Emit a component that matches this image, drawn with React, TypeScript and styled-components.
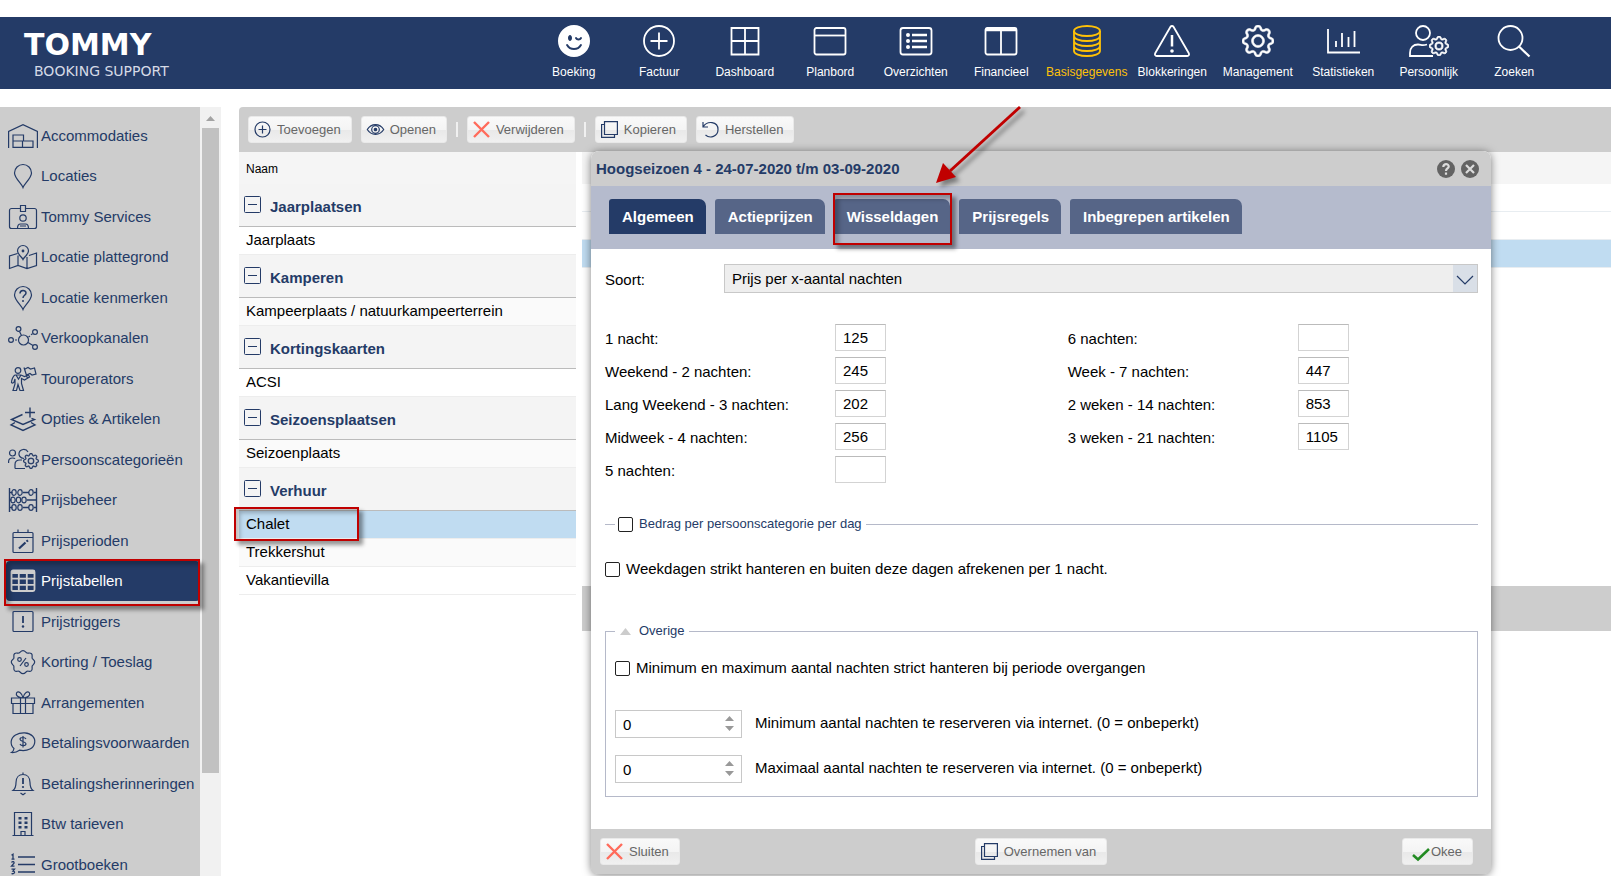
import React from 'react';
import styled, { createGlobalStyle, css } from 'styled-components';
import { BsEmojiWinkFill, BsGear } from 'react-icons/bs';

const navy = '#243b67';
const grey = '#cdcdcd';
const red = '#c00000';
const line = '#b5b9c9';

const GlobalStyle = createGlobalStyle`
  *, *::before, *::after { box-sizing: border-box; }
  body {
    margin: 0;
    background: #fff;
    color: #000;
    font-family: "Liberation Sans", Arial, Helvetica, sans-serif;
    font-size: 15px;
    line-height: 16px;
  }
  button, input, select { font: inherit; margin: 0; }
`;

const Page = styled.div`
  display: flex;
  flex-direction: column;
  gap: 18px;
  height: 100vh;
  padding-top: 17px;
  overflow: hidden;
`;

/* ---------- top bar ---------- */

const TopBar = styled.header`
  display: flex;
  flex: none;
  justify-content: space-between;
  height: 72px;
  padding: 0 54px 0 24px;
  background: ${navy};
`;

const Logo = styled.div`
  display: flex;
  flex-direction: column;
  padding-top: 10px;
  color: #fff;
  font-family: "DejaVu Sans", sans-serif;
`;

const LogoName = styled.span`
  font-size: 30px;
  font-weight: 700;
  line-height: 36px;
`;

const LogoTag = styled.span`
  padding-left: 10px;
  color: #d5dae6;
  font-size: 14px;
  line-height: 16px;
`;

const MainNav = styled.nav`
  display: grid;
  grid-template-columns: repeat(12, 1fr);
  width: 1026px;
`;

const MainLink = styled.a<{ $active?: boolean }>`
  display: flex;
  flex-direction: column;
  align-items: center;
  gap: 7px;
  padding-top: 8px;
  color: ${p => (p.$active ? '#ffc107' : '#fff')};
  font-size: 12px;
  text-decoration: none;
`;

const MainIcon = styled.svg.attrs({ viewBox: '0 0 40 32', 'aria-hidden': true })`
  width: 40px;
  height: 32px;
  overflow: visible;
  fill: none;
  stroke: currentColor;
  stroke-width: 1.8;
`;

const solid = { fill: 'currentColor', stroke: 'none' };
const gear = { fill: 'currentColor', stroke: 'currentColor', strokeWidth: 0.3 };

const mainItems: { label: string; active?: boolean; icon: React.ReactNode }[] = [
  { label: 'Boeking', icon: <BsEmojiWinkFill x={4} y={0} size={32} {...solid} /> },
  { label: 'Factuur', icon: <><circle cx="20" cy="16" r="15" /><path d="M11.5 16h17M20 7.5v17" /></> },
  { label: 'Dashboard', icon: <path d="M6.5 3h27v26.500h-27zM20 3v26.500M6.500 16h27" /> },
  { label: 'Planbord', icon: <><rect x="4.500" y="3" width="31" height="26.500" rx="2" /><path d="M4.500 10.500h31" /></> },
  {
    label: 'Overzichten',
    icon: (
      <>
        <rect x="4.500" y="3" width="31" height="26.500" rx="2.500" />
        <path d="M16 10h15M16 16h15M16 22h15" strokeWidth="2.400" />
        <g {...solid}><circle cx="12" cy="10" r="2" /><circle cx="12" cy="16" r="2" /><circle cx="12" cy="22" r="2" /></g>
      </>
    ),
  },
  { label: 'Financieel', icon: <><rect x="4.500" y="3" width="31" height="26.500" rx="2" /><path d="M20 5v24.500" /><path d="M4.500 4.500h31" strokeWidth="3.500" /></> },
  {
    label: 'Basisgegevens',
    active: true,
    icon: (
      <>
        <ellipse cx="20" cy="6" rx="13" ry="5" />
        <path d="M7 6v20c0 2.800 5.800 5 13 5s13-2.200 13-5V6M7 11c0 2.800 5.800 5 13 5s13-2.200 13-5M7 16c0 2.800 5.800 5 13 5s13-2.200 13-5M7 21c0 2.800 5.800 5 13 5s13-2.200 13-5" />
      </>
    ),
  },
  {
    label: 'Blokkeringen',
    icon: (
      <>
        <path d="M18.500 1.800a1.800 1.800 0 0 1 3 0l15.300 26.500c.700 1.300 0 2.700-1.500 2.700H4.700c-1.500 0-2.200-1.400-1.500-2.700z" />
        <path d="M20 10v11.500" strokeWidth="2.500" />
        <circle cx="20" cy="26" r="1.800" {...solid} />
      </>
    ),
  },
  { label: 'Management', icon: <BsGear x={4} y={0} size={32} {...gear} /> },
  { label: 'Statistieken', icon: <path d="M5 4v23.500h32M13 16v6M19 8v14M25.500 12v10M31.500 6v16" /> },
  {
    label: 'Persoonlijk',
    icon: (
      <>
        <circle cx="14" cy="8" r="7" />
        <path d="M24 31H1v-3c0-5.500 3.500-8.500 8-8.500 3.500 0 3.500 1.500 9 0" />
        <BsGear x={20} y={11} size={20} {...gear} strokeWidth={0.6} />
      </>
    ),
  },
  { label: 'Zoeken', icon: <><circle cx="16.500" cy="13" r="12" /><path d="M25 21.500l10.500 10" strokeWidth="2.200" /></> },
];

/* ---------- side bar ---------- */

const Content = styled.div`
  display: flex;
  flex: 1;
  min-height: 0;
`;

const SideNav = styled.nav`
  position: relative;
  z-index: 1;
  flex: none;
  width: 200px;
  padding-top: 8px;
  background: ${grey};
`;

const SideLink = styled.a<{ $active?: boolean }>`
  position: relative;
  display: flex;
  align-items: center;
  gap: 3px;
  height: 40px;
  padding-left: 8px;
  color: ${navy};
  text-decoration: none;
  &:nth-child(odd) { height: 41px; }
  ${p => p.$active && css`
    margin-left: 6px;
    padding-left: 2px;
    border-radius: 4px;
    background: ${navy};
    color: #fff;
    svg { color: ${grey}; }
  `}
`;

const SideIcon = styled.svg.attrs({ viewBox: '0 0 30 24', 'aria-hidden': true })`
  flex: none;
  width: 30px;
  height: 24px;
  overflow: visible;
  fill: none;
  stroke: currentColor;
  stroke-width: 1.200;
`;

const Highlight = styled.span<{ $inset: string }>`
  position: absolute;
  inset: ${p => p.$inset};
  border: 2px solid ${red};
  box-shadow: 4px 4px 4px rgba(0, 0, 0, 0.4), inset 4px 4px 4px rgba(0, 0, 0, 0.25);
  pointer-events: none;
`;

const Scrollbar = styled.div`
  display: flex;
  flex: none;
  flex-direction: column;
  align-items: center;
  width: 21px;
  background: #f1f1f1;
`;

const ScrollArrow = styled.svg.attrs({ viewBox: '0 0 21 21', 'aria-hidden': true })`
  flex: none;
  width: 21px;
  height: 21px;
  fill: #a3a3a3;
`;

const ScrollTrack = styled.div`
  flex: 1;
  width: 17px;
`;

const ScrollThumb = styled.div`
  height: calc(100% - 103px);
  background: #c1c1c1;
`;

const pin = 'M15 23.500C13.500 19.500 6.500 14 6.500 9a8.500 8.500 0 0 1 17 0c0 5-7 10.500-8.500 14.500z';

const sideItems: { label: string; active?: boolean; icon: React.ReactNode }[] = [
  { label: 'Accommodaties', icon: <path d="M.600 24V7.500L15 .700l14.400 6.800V24M5 23.400V11h10.500v6H5h20v6.400zM14.500 17v6.400" /> },
  { label: 'Locaties', icon: <path d={pin} /> },
  {
    label: 'Tommy Services',
    icon: <><path d="M12.500 3.500H3.500a2 2 0 0 0-2 2v16a2 2 0 0 0 2 2h23a2 2 0 0 0 2-2v-16a2 2 0 0 0-2-2h-9M12.500.500h5v6h-5zM9.500 23.500c0-3 1-4.500 3-4.500h5c2 0 3 1.500 3 4.500M12 21h6" /><circle cx="15" cy="13" r="3.200" /></>,
  },
  {
    label: 'Locatie plattegrond',
    icon: <><path d="M15 14.500c-1-2.500-5.500-5-5.500-8.500a5.500 5.500 0 0 1 11 0c0 3.500-4.500 6-5.500 8.500zM9.500 8.500L1.500 11v12.500l8.500-3 9 3 9.500-3V8l-7.500 2.500M10 10.500v10M19 12v11.500" /><circle cx="15" cy="6" r=".800" fill="currentColor" /></>,
  },
  { label: 'Locatie kenmerken', icon: <><path d={pin} /><path d="M12 7.500c0-4 6-4 6-.500 0 2.500-3 2-3 5" strokeWidth="1.500" /><circle cx="15" cy="15" r="1" {...solid} /></> },
  {
    label: 'Verkoopkanalen',
    icon: <><circle cx="15.500" cy="14" r="5" /><circle cx="3" cy="14" r="2.400" /><circle cx="10.500" cy="3" r="2.400" /><circle cx="27" cy="6" r="2.400" /><circle cx="27" cy="21" r="2.400" /><path d="M7 14h2M11.500 5.500l2 4M20.500 11l1.500-1M23 8.800l1.500-1M20 16.500l5 3" /></>,
  },
  {
    label: 'Touroperators',
    icon: <><circle cx="10" cy="3.500" r="2.800" /><path d="M7 8c-2 1-3.500 5-3.500 7.500 1 1 2 .500 2.500-.500l1-3v5l-2 6.500h3.500l1.500-6 2 6h3.500l-2-7v-5l3 1.500 5-3-1-2-4 1.500L13 8zM8 8l2.500 4L13 8M19.500 11.500L16 .500M17 2l3-1.500 2.500 1.500L26.500 1 28 7l-4 1-2-1.500-3.500 1.500" /></>,
  },
  { label: 'Opties & Artikelen', icon: <path d="M14.500 7.500L3.500 12.500l11.500 5 11.500-5-3-1.200M7 15.500l-4 2.500 12 5.500L27 18l-4-2.500M22 .500v10M17 5.500h10" strokeWidth="1.400" /> },
  {
    label: 'Persoonscategorieën',
    icon: <><circle cx="4.500" cy="5" r="3" /><path d="M.600 15v-1.500c0-2.500 1.500-3.500 4-3.500 1.200 0 2 .200 2.500.600M16 10.500c-4-.500-5.500-3-5-5.500.800-4 7-5 9-1M7 20.500v-4c0-3 2-4.500 5-4.500h2M7 20.500h10" /><BsGear x={15} y={5} size={16} {...gear} /></>,
  },
  {
    label: 'Prijsbeheer',
    icon: (
      <>
        <path d="M1.500 0v24M28.500 0v24M1.500 4.500h3M15 4.500h6M26 4.500h2.500M1.500 12h2M19 12h9.500M1.500 19.500h3M15 19.500h6M26 19.500h2.500" strokeWidth="1.400" />
        {[[6, 4.5], [12, 4.5], [23, 4.5], [5, 12], [10.5, 12], [16, 12], [6, 19.5], [12, 19.5], [23, 19.5]].map(([x, y]) => <ellipse key={`${x}-${y}`} cx={x} cy={y} rx="2.200" ry="2.800" />)}
      </>
    ),
  },
  { label: 'Prijsperioden', icon: <><rect x="5" y="3.500" width="20" height="20" rx="1" /><path d="M5 8.500h20M10 .500v3M20 .500v3" /><path d="M11 19.500l6.500-6M18.500 12.500l1.500-1.200" strokeWidth="2.200" /></> },
  { label: 'Prijstabellen', active: true, icon: <><rect x="3.500" y="1.500" width="23" height="20.500" rx="1.500" strokeWidth="1.800" /><path d="M4 3.200h22" strokeWidth="3.600" /><path d="M3.500 9.700h23M3.500 15.800h23M10.800 2v20M18.800 2v20" strokeWidth="1.800" /></> },
  { label: 'Prijstriggers', icon: <><rect x="5" y="1.500" width="20" height="20" rx="1" /><path d="M15 6v7" strokeWidth="1.800" /><circle cx="15" cy="16.500" r="1.200" {...solid} /></> },
  {
    label: 'Korting / Toeslag',
    icon: <><path d="M15 .700c2.200 0 2.800 1.800 4 2.300 1.500.500 3-.700 4.500.700 1.400 1.500.200 3 .700 4.500.500 1.200 2.500 1.800 2.500 3.900s-2 2.800-2.500 4c-.500 1.500.700 3-.700 4.500-1.500 1.400-3 .200-4.500.700-1.200.500-1.800 2.300-4 2.300s-2.800-1.800-4-2.300c-1.500-.500-3 .700-4.500-.700-1.400-1.500-.200-3-.700-4.500-.500-1.200-2.500-1.900-2.500-4s2-2.700 2.500-3.900c.500-1.500-.700-3 .700-4.500 1.500-1.400 3-.200 4.500-.700 1.200-.500 1.800-2.300 4-2.300zM18 8l-6 8" /><circle cx="11.500" cy="9.500" r="1.800" /><circle cx="18.500" cy="14.500" r="1.800" /></>,
  },
  { label: 'Arrangementen', icon: <path d="M3.500 7h23v5.500h-23zM5 12.500h20v10H5zM12.500 7v15.500M17.500 7v15.500M15 7C10 6.500 7.500 4.500 8.500 2 10-.500 14 1.500 15 7c1-5.500 5-7.500 6.500-5 1 2.500-1.500 4.500-6.500 5" /> },
  { label: 'Betalingsvoorwaarden', icon: <><path d="M6 17.500C1.500 13.500 2.500 7 7.500 4 13 .700 21 1.200 24.500 5c4 4 2.500 10.500-2.500 13-4 2-7 1.800-10.500 1.200C9 21 6.500 21.800 3.500 21.500c1.500-1 2.300-2.200 2.500-4z" /><path d="M18 8c-1-2-6-2-6 .200S18 10.500 18 12.800s-5 2.500-6 .200M15 5v11.500" /></> },
  { label: 'Betalingsherinneringen', icon: <><path d="M15 .500v2M5 18.500h20c-2.500-2-3-3.500-3-8 0-5-3-8-7-8s-7 3-7 8c0 4.500-.500 6-3 8zM12.500 21l2.500 1.800 2.500-1.800" /><path d="M15 6v6" strokeWidth="1.800" /><circle cx="15" cy="15" r="1.100" {...solid} /></> },
  { label: 'Btw tarieven', icon: <><path d="M6.500 23.500v-23h17v23M4.500 23.500h21M13 23.500v-4h4v4" /><path d="M12 5v12M18 5v12" strokeWidth="3" strokeDasharray="2.500 2" /></> },
  { label: 'Grootboeken', icon: <path d="M10 4h17M10 11.500h17M10 19h17M3.500 2.200l1.500-1v5M3.500 6.200h3M3.500 9.500c1-1.500 3-.800 2.500.700l-2.500 3h3M3.500 16.200h3l-1.500 2c2.500 0 2 3-1.500 2.500" strokeWidth="1.300" /> },
];

/* ---------- work area ---------- */

const Workspace = styled.main`
  position: relative;
  display: flex;
  flex: 1;
  flex-direction: column;
  min-width: 0;
  margin-left: 18px;
`;

const Toolbar = styled.div`
  display: flex;
  flex: none;
  align-items: center;
  gap: 9px;
  height: 45px;
  padding-left: 9px;
  border-top-left-radius: 4px;
  background: ${grey};
`;

const Separator = styled.span`
  width: 2px;
  height: 15px;
  background: #f0f0f0;
`;

const ToolButton = styled.button`
  display: flex;
  align-items: center;
  gap: 6px;
  height: 27px;
  padding: 0 10px 0 5px;
  border: 1px solid #e9e9e9;
  border-radius: 3px;
  background: linear-gradient(#f9f9f9, #f4f4f4 52%, #e9e9e9 54%, #f0f0f0);
  color: #666;
  font-size: 13px;
  white-space: nowrap;
`;

const ToolIcon = styled.svg.attrs({ viewBox: '0 0 17 17', 'aria-hidden': true })`
  width: 17px;
  height: 17px;
  overflow: visible;
  fill: none;
  stroke: ${navy};
  stroke-width: 1.200;
`;

const CrossIcon = () => (
  <ToolIcon><path d="M1 1l15 15M16 1L1 16" stroke="#ff6b5b" strokeWidth="2.400" /></ToolIcon>
);

const CopyIcon = () => (
  <ToolIcon><path d="M3.500.600h12.900v12.900H3.500zM3.500 3.500H.600v12.900h12.900v-2.900" /></ToolIcon>
);

const Panels = styled.div`
  display: flex;
  flex: 1;
  gap: 6px;
  min-height: 0;
`;

const ListPanel = styled.section`
  flex: none;
  width: 337px;
`;

const ListTable = styled.table`
  width: 100%;
  border-collapse: separate;
  border-spacing: 0;
`;

const ListHead = styled.th`
  height: 32px;
  padding: 2px 7px 0;
  background: #f5f5f5;
  font-size: 12px;
  font-weight: 400;
  text-align: left;
`;

const GroupCell = styled.th`
  height: 43px;
  padding: 0 5px 2px;
  border-bottom: 1px solid #bbb;
  background: #f4f4f4;
  color: ${navy};
  text-align: left;
`;

const GroupInner = styled.div`
  display: flex;
  gap: 9px;
  align-items: center;
`;

const GroupName = styled.span`
  padding-top: 6px;
`;

const ToggleIcon = styled.svg.attrs({ viewBox: '0 0 17 17', 'aria-hidden': true })`
  width: 17px;
  height: 17px;
  fill: none;
  stroke: ${navy};
`;

const ItemCell = styled.td<{ $tone: 'plain' | 'alt' | 'selected' }>`
  position: relative;
  z-index: ${p => (p.$tone === 'selected' ? 1 : 0)};
  height: 28px;
  padding: 0 7px 2px;
  border-bottom: 1px solid #ededed;
  background: ${p => ({ plain: '#fff', alt: '#fafafa', selected: '#c0dcf1' }[p.$tone])};
`;

const DetailPanel = styled.section`
  flex: 1;
  min-width: 0;
`;

const DetailHead = styled.div`
  height: 32px;
  background: #f5f5f5;
`;

const DetailRow = styled.div<{ $selected?: boolean }>`
  height: 28px;
  border-bottom: 1px solid #e8edf1;
  background: ${p => (p.$selected ? '#c0dcf1' : '#fff')};
`;

const DetailBar = styled.div`
  height: 45px;
  margin-top: 318px;
  background: ${grey};
`;

const groups = [
  { name: 'Jaarplaatsen', items: ['Jaarplaats'] },
  { name: 'Kamperen', items: ['Kampeerplaats / natuurkampeerterrein'] },
  { name: 'Kortingskaarten', items: ['ACSI'] },
  { name: 'Seizoensplaatsen', items: ['Seizoenplaats'] },
  { name: 'Verhuur', items: ['Chalet', 'Trekkershut', 'Vakantievilla'] },
];
const altRows = ['Kampeerplaats / natuurkampeerterrein', 'Seizoenplaats', 'Trekkershut'];

const toneOf = (item: string) =>
  item === 'Chalet' ? 'selected' : altRows.includes(item) ? 'alt' : 'plain';

/* ---------- dialog ---------- */

const Dialog = styled.section`
  position: absolute;
  z-index: 2;
  top: 44px;
  right: 120px;
  left: 352px;
  border-radius: 8px;
  background: #fff;
  box-shadow: 0 1px 8px rgba(0, 0, 0, 0.5);
`;

const DialogTitle = styled.header`
  display: flex;
  align-items: center;
  gap: 6px;
  height: 35px;
  padding: 0 12px 0 5px;
  border-radius: 8px 8px 0 0;
  background: ${grey};
`;

const TitleText = styled.h2`
  flex: 1;
  margin: 0;
  color: ${navy};
  font-size: 15px;
  line-height: 16px;
`;

const RoundButton = styled.button`
  width: 18px;
  height: 18px;
  padding: 0;
  border: 0;
  border-radius: 50%;
  background: #636363;
  svg {
    display: block;
    fill: none;
    stroke: #dcdcdc;
    stroke-width: 2.200;
  }
`;

const TabBar = styled.div`
  display: flex;
  gap: 9px;
  height: 63px;
  padding: 13px 18px 0;
  background: #b5bbcd;
`;

const Tab = styled.button<{ $active?: boolean }>`
  position: relative;
  height: 35px;
  padding: 0 12px 0 13px;
  border: 0;
  border-radius: 3px 7px 0 0;
  background: ${p => (p.$active ? navy : '#566587')};
  color: #fff;
  font-weight: 700;
  white-space: nowrap;
`;

const DialogBody = styled.div`
  padding: 15px 13px 32px 14px;
`;

const SelectRow = styled.div`
  display: grid;
  grid-template-columns: 119px 1fr;
  align-items: center;
  label { padding-top: 2px; }
`;

const SelectBox = styled.div`
  position: relative;
  select {
    display: block;
    width: 100%;
    height: 29px;
    padding: 0 32px 0 7px;
    border: 1px solid #c8c8c8;
    border-radius: 0;
    appearance: none;
    background: #eee;
    color: #000;
  }
`;

const SelectArrow = styled.svg.attrs({ viewBox: '0 0 24 27', 'aria-hidden': true })`
  position: absolute;
  top: 1px;
  right: 1px;
  width: 24px;
  height: 27px;
  background: #d9dfe7;
  fill: none;
  stroke: ${navy};
  stroke-width: 1.200;
  pointer-events: none;
`;

const PriceColumns = styled.div`
  display: grid;
  grid-template-columns: 53% 1fr;
  align-items: start;
  margin-top: 31px;
`;

const PriceColumn = styled.div`
  display: grid;
  gap: 6px;
`;

const PriceRow = styled.div`
  display: grid;
  grid-template-columns: 230px 51px;
  align-items: center;
  label { padding-top: 2px; }
  input {
    width: 100%;
    height: 27px;
    padding: 1px 7px;
    border: 1px solid #d3d3d3;
    border-top-color: #bbb;
    background: #fff;
  }
`;

const CheckLabel = styled.label`
  display: flex;
  align-items: center;
  gap: 6px;
  height: 16px;
`;

const CheckBox = styled.input.attrs({ type: 'checkbox' })`
  flex: none;
  width: 15px;
  height: 15px;
  border: 1px solid #222;
  border-radius: 2px;
  appearance: none;
  background: #fff;
`;

const LineSet = styled.fieldset`
  height: 16px;
  min-width: 0;
  margin: 33px 0 29px;
  padding: 0 0 0 10px;
  border: 0;
  border-top: 1px solid ${line};
`;

const BoxSet = styled.fieldset`
  min-width: 0;
  margin: 46px 0 0;
  padding: 21px 9px 13px;
  border: 1px solid ${line};
`;

const Legend = styled.legend`
  display: flex;
  align-items: center;
  height: 16px;
  padding: 0 4px 0 3px;
  color: ${navy};
  font-size: 13px;
`;

const LegendToggle = styled.button`
  display: flex;
  align-items: center;
  gap: 6px;
  padding: 0;
  border: 0;
  background: none;
  color: inherit;
  svg { fill: #ccc; }
`;

const LimitList = styled.div`
  display: grid;
  gap: 17px;
  margin-top: 34px;
`;

const LimitRow = styled.div`
  display: grid;
  grid-template-columns: 127px 1fr;
  gap: 13px;
  align-items: center;
  label { padding-bottom: 3px; }
`;

const Spinner = styled.div`
  position: relative;
  input {
    display: block;
    width: 100%;
    height: 28px;
    padding: 1px 24px 1px 7px;
    border: 1px solid #c8c8c8;
    border-radius: 0;
    appearance: textfield;
    &::-webkit-inner-spin-button { display: none; }
  }
  svg {
    position: absolute;
    top: 6px;
    right: 8px;
    fill: #999;
    pointer-events: none;
  }
`;

const DialogFooter = styled.footer`
  display: grid;
  grid-template-columns: 1fr auto 1fr;
  align-items: center;
  height: 45px;
  padding: 0 9px;
  border-radius: 0 0 6px 6px;
  background: ${grey};
`;

const OkeeButton = styled(ToolButton)`
  gap: 2px;
  justify-self: end;
  margin-right: 9px;
  padding-left: 9px;
`;

const StartCell = styled.div`
  justify-self: start;
`;

const PointerArrow = styled.svg.attrs({ viewBox: '0 0 96 88', 'aria-hidden': true })`
  position: absolute;
  z-index: 3;
  top: -4px;
  left: 693px;
  width: 96px;
  height: 88px;
  overflow: visible;
  filter: drop-shadow(4px 4px 2px rgba(0, 0, 0, 0.4));
  pointer-events: none;
`;

const prices = [
  [
    { label: '1 nacht:', value: '125' },
    { label: 'Weekend - 2 nachten:', value: '245' },
    { label: 'Lang Weekend - 3 nachten:', value: '202' },
    { label: 'Midweek - 4 nachten:', value: '256' },
    { label: '5 nachten:', value: '' },
  ],
  [
    { label: '6 nachten:', value: '' },
    { label: 'Week - 7 nachten:', value: '447' },
    { label: '2 weken - 14 nachten:', value: '853' },
    { label: '3 weken - 21 nachten:', value: '1105' },
  ],
];

const tabs = ['Algemeen', 'Actieprijzen', 'Wisseldagen', 'Prijsregels', 'Inbegrepen artikelen'];

const limits = [
  { id: 'min', label: 'Minimum aantal nachten te reserveren via internet. (0 = onbeperkt)' },
  { id: 'max', label: 'Maximaal aantal nachten te reserveren via internet. (0 = onbeperkt)' },
];

function PriceDialog() {
  return (
    <Dialog role="dialog" aria-labelledby="dialog-title">
      <DialogTitle>
        <TitleText id="dialog-title">Hoogseizoen 4 - 24-07-2020 t/m 03-09-2020</TitleText>
        <RoundButton aria-label="Help">
          <svg viewBox="0 0 18 18"><path d="M6.300 7c0-4 5.600-3.600 5.400-.400C11.600 8.500 9 8.500 9 11M9 12.500v2.200" /></svg>
        </RoundButton>
        <RoundButton aria-label="Sluit venster">
          <svg viewBox="0 0 18 18"><path d="M5 5l8 8M13 5l-8 8" /></svg>
        </RoundButton>
      </DialogTitle>
      <TabBar role="tablist">
        {tabs.map((tab, i) => (
          <Tab key={tab} role="tab" aria-selected={i === 0} $active={i === 0}>
            {tab}
            {tab === 'Wisseldagen' && <Highlight $inset="-6px -2px -11px -1px" />}
          </Tab>
        ))}
      </TabBar>
      <DialogBody>
        <SelectRow>
          <label htmlFor="soort">Soort:</label>
          <SelectBox>
            <select id="soort"><option>Prijs per x-aantal nachten</option></select>
            <SelectArrow><path d="M4 11l8 8 8-8" /></SelectArrow>
          </SelectBox>
        </SelectRow>
        <PriceColumns>
          {prices.map((column, c) => (
            <PriceColumn key={c}>
              {column.map((price, r) => (
                <PriceRow key={price.label}>
                  <label htmlFor={`prijs-${c}-${r}`}>{price.label}</label>
                  <input id={`prijs-${c}-${r}`} type="text" defaultValue={price.value} />
                </PriceRow>
              ))}
            </PriceColumn>
          ))}
        </PriceColumns>
        <LineSet>
          <Legend><CheckLabel><CheckBox />Bedrag per persoonscategorie per dag</CheckLabel></Legend>
        </LineSet>
        <CheckLabel><CheckBox />Weekdagen strikt hanteren en buiten deze dagen afrekenen per 1 nacht.</CheckLabel>
        <BoxSet>
          <Legend>
            <LegendToggle>
              <svg width="15" height="16" viewBox="0 0 15 16"><path d="M2 12l5.500-7 5.500 7z" /></svg>
              Overige
            </LegendToggle>
          </Legend>
          <CheckLabel><CheckBox />Minimum en maximum aantal nachten strict hanteren bij periode overgangen</CheckLabel>
          <LimitList>
            {limits.map(limit => (
              <LimitRow key={limit.id}>
                <Spinner>
                  <input id={limit.id} type="number" defaultValue={0} />
                  <svg width="9" height="16" viewBox="0 0 9 16"><path d="M0 5l4.500-5L9 5zM0 10l4.500 5L9 10z" /></svg>
                </Spinner>
                <label htmlFor={limit.id}>{limit.label}</label>
              </LimitRow>
            ))}
          </LimitList>
        </BoxSet>
      </DialogBody>
      <DialogFooter>
        <StartCell><ToolButton><CrossIcon />Sluiten</ToolButton></StartCell>
        <ToolButton><CopyIcon />Overnemen van</ToolButton>
        <OkeeButton>
          <ToolIcon><path d="M1 12l5 4.500L17 6" stroke="#228b22" strokeWidth="2.600" /></ToolIcon>
          Okee
        </OkeeButton>
      </DialogFooter>
    </Dialog>
  );
}

export default function App() {
  return (
    <>
      <GlobalStyle />
      <Page>
        <TopBar>
          <Logo>
            <LogoName>TOMMY</LogoName>
            <LogoTag>BOOKING SUPPORT</LogoTag>
          </Logo>
          <MainNav>
            {mainItems.map(item => (
              <MainLink key={item.label} href="#" $active={item.active}>
                <MainIcon>{item.icon}</MainIcon>
                {item.label}
              </MainLink>
            ))}
          </MainNav>
        </TopBar>
        <Content>
          <SideNav>
            {sideItems.map(item => (
              <SideLink key={item.label} href="#" $active={item.active}>
                <SideIcon>{item.icon}</SideIcon>
                {item.label}
                {item.active && <Highlight $inset="-2px 0 -5px -2px" />}
              </SideLink>
            ))}
          </SideNav>
          <Scrollbar>
            <ScrollArrow><path d="M6 14l4.500-5 4.500 5z" /></ScrollArrow>
            <ScrollTrack><ScrollThumb /></ScrollTrack>
          </Scrollbar>
          <Workspace>
            <Toolbar>
              <ToolButton>
                <ToolIcon><circle cx="8.500" cy="8.500" r="7.500" /><path d="M4.500 8.500h8M8.500 4.500v8" /></ToolIcon>
                Toevoegen
              </ToolButton>
              <ToolButton>
                <ToolIcon><path d="M.300 8.500c4-6.500 12.400-6.500 16.400 0-4 6.500-12.400 6.500-16.400 0z" /><circle cx="8.500" cy="8.500" r="3.800" /><circle cx="8.500" cy="8.500" r="1.200" fill={navy} /></ToolIcon>
                Openen
              </ToolButton>
              <Separator />
              <ToolButton><CrossIcon />Verwijderen</ToolButton>
              <Separator />
              <ToolButton><CopyIcon />Kopieren</ToolButton>
              <ToolButton>
                <ToolIcon><path d="M1 1v5h5M1.200 5.800C5-.500 16 0 16 8.500c0 7-8 9.500-12.500 5.500" /></ToolIcon>
                Herstellen
              </ToolButton>
            </Toolbar>
            <Panels>
              <ListPanel>
                <ListTable>
                  <thead><tr><ListHead scope="col">Naam</ListHead></tr></thead>
                  {groups.map(group => (
                    <tbody key={group.name}>
                      <tr>
                        <GroupCell scope="rowgroup">
                          <GroupInner>
                            <ToggleIcon><rect x=".500" y=".500" width="16" height="16" rx="1" /><path d="M4 8.500h9" /></ToggleIcon>
                            <GroupName>{group.name}</GroupName>
                          </GroupInner>
                        </GroupCell>
                      </tr>
                      {group.items.map(item => (
                        <tr key={item}>
                          <ItemCell $tone={toneOf(item)}>
                            {item}
                            {item === 'Chalet' && <Highlight $inset="-4px 217px -3px -5px" />}
                          </ItemCell>
                        </tr>
                      ))}
                    </tbody>
                  ))}
                </ListTable>
              </ListPanel>
              <DetailPanel>
                <DetailHead />
                <DetailRow />
                <DetailRow />
                <DetailRow $selected />
                <DetailBar />
              </DetailPanel>
            </Panels>
            <PriceDialog />
            <PointerArrow>
              <path d="M88 4L18 68" stroke={red} strokeWidth="3" />
              <path d="M4 80l7-20 13 14z" fill={red} />
            </PointerArrow>
          </Workspace>
        </Content>
      </Page>
    </>
  );
}
